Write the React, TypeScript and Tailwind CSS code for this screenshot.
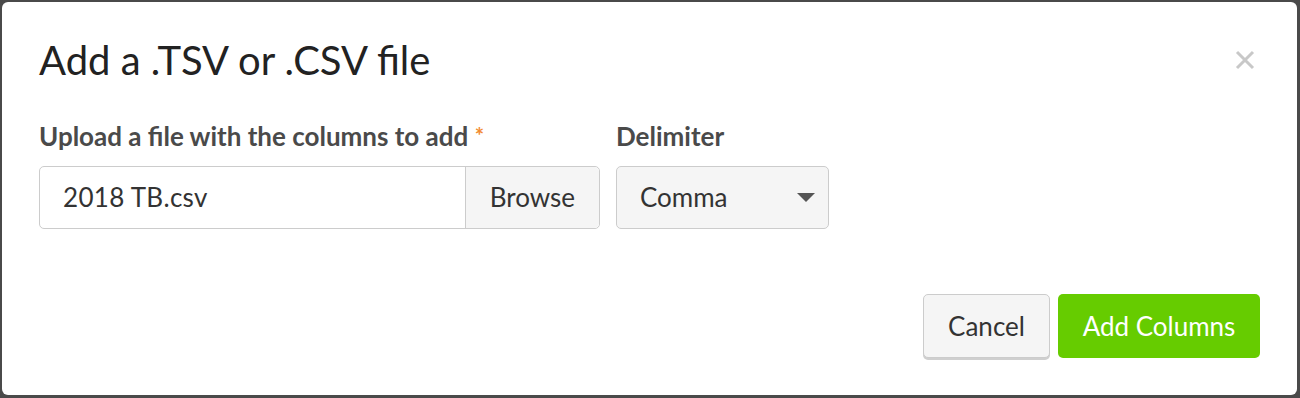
import { useState } from "react";

const AddFileDialog = () => {
  const [fileName] = useState("2018 TB.csv");
  const [delimiter, setDelimiter] = useState("Comma");

  return (
    <div className="h-[398px] w-[1300px] bg-[#4a4a4a] pt-[2px] pl-[2px] pr-[3px] pb-[3px] font-['Lato','Liberation_Sans',sans-serif]">
      <div className="flex h-full flex-col rounded-[6px] bg-white px-[37px]">
        <div className="flex items-start justify-between pt-[30px]">
          <h2 className="text-[40px] leading-[56px] text-[#222]">Add a .TSV or .CSV file</h2>
          <button className="mt-[18px] mr-[5px] text-[#c8c8c8]" aria-label="Close">
            <svg width="20" height="20" viewBox="0 0 20 20">
              <path d="M2 2 L18 18 M18 2 L2 18" stroke="currentColor" strokeWidth="3" />
            </svg>
          </button>
        </div>

        <div className="mt-[33px] flex gap-[16px]">
          <div className="w-[561px]">
            <label className="block text-[26px] font-bold leading-[30px] text-[#4a4a4a]">
              Upload a file with the columns to add{" "}
              <span className="align-top text-[22px] text-[#f28b30]">*</span>
            </label>
            <div className="mt-[15px] flex h-[63px] rounded-[5px] border border-[#cccccc]">
              <div className="flex flex-1 items-center px-[23px] text-[26px] tracking-[0.3px] text-[#333]">{fileName}</div>
              <button className="rounded-r-[5px] border-l border-[#cccccc] bg-[#f5f5f5] px-[24px] text-[26px] text-[#333]">
                Browse
              </button>
            </div>
          </div>
          <div className="w-[213px]">
            <label className="block text-[26px] font-bold leading-[30px] text-[#4a4a4a]">Delimiter</label>
            <button
              className="mt-[15px] flex h-[63px] w-full items-center justify-between rounded-[5px] border border-[#cccccc] bg-[#f5f5f5] pl-[23px] pr-[13px] text-[26px] text-[#333]"
              onClick={() => setDelimiter(delimiter === "Comma" ? "Tab" : "Comma")}
            >
              {delimiter}
              <svg width="18" height="9" viewBox="0 0 18 9">
                <path d="M0 0 H18 L9 9 Z" fill="#555" />
              </svg>
            </button>
          </div>
        </div>

        <div className="mt-auto mb-[37px] flex justify-end gap-[8px]">
          <button className="h-[64px] w-[127px] rounded-[5px] border border-[#cccccc] bg-[#f5f5f5] text-[26px] text-[#333] shadow-[0_2px_0_#cfcfcf]">
            Cancel
          </button>
          <button className="h-[64px] w-[202px] rounded-[5px] bg-[#66cc00] text-[26px] text-white">
            Add Columns
          </button>
        </div>
      </div>
    </div>
  );
};

export default function App() {
  return <AddFileDialog />;
}
